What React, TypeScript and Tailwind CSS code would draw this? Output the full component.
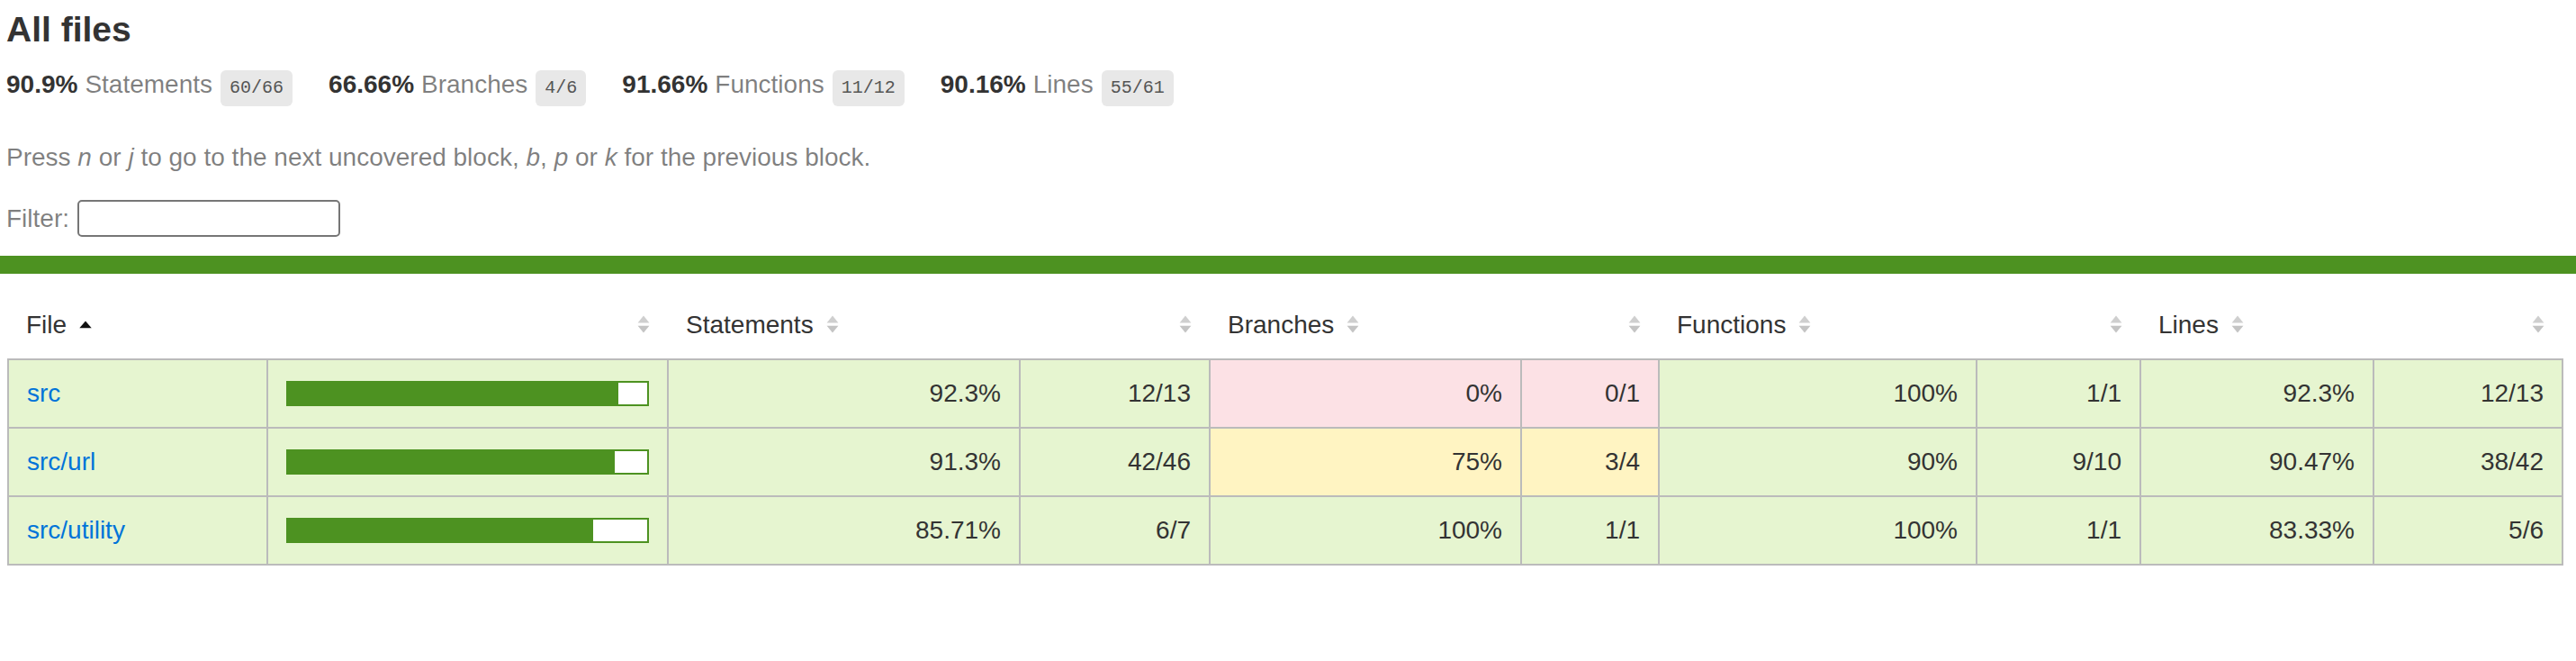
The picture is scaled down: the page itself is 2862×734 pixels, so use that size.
import React from "react";

type Level = "high" | "low" | "medium";

const bg: Record<Level, string> = {
  high: "bg-[rgb(230,245,208)]",
  low: "bg-[#fce1e5]",
  medium: "bg-[#fff4c2]",
};

type Metric = [string, string, Level];

const rows: { file: string; pct: number; s: Metric; b: Metric; f: Metric; l: Metric }[] = [
  { file: "src", pct: 92, s: ["92.3%", "12/13", "high"], b: ["0%", "0/1", "low"], f: ["100%", "1/1", "high"], l: ["92.3%", "12/13", "high"] },
  { file: "src/url", pct: 91, s: ["91.3%", "42/46", "high"], b: ["75%", "3/4", "medium"], f: ["90%", "9/10", "high"], l: ["90.47%", "38/42", "high"] },
  { file: "src/utility", pct: 85, s: ["85.71%", "6/7", "high"], b: ["100%", "1/1", "high"], f: ["100%", "1/1", "high"], l: ["83.33%", "5/6", "high"] },
];

const summary = [
  { pct: "90.9%", label: "Statements", frac: "60/66" },
  { pct: "66.66%", label: "Branches", frac: "4/6" },
  { pct: "91.66%", label: "Functions", frac: "11/12" },
  { pct: "90.16%", label: "Lines", frac: "55/61" },
];

function Sorter({ sorted = false }: { sorted?: boolean }) {
  return (
    <svg width="14" height="20" viewBox="0 0 14 20" className="inline-block align-baseline ml-[14px]">
      {sorted ? (
        <path d="M7 6.4 L13.7 14.3 L0.3 14.3 Z" fill="#111" />
      ) : (
        <>
          <path d="M7 0.6 L13.4 8.4 L0.6 8.4 Z" fill="#cfcfcf" />
          <path d="M0.6 11.8 L13.4 11.8 L7 19.6 Z" fill="#c4c4c4" />
        </>
      )}
    </svg>
  );
}

const cell = "px-[20px] py-[20px] leading-[34px] border-r-2 border-[#bbb] text-right text-[#333]";

export default function App() {
  return (
    <div className="min-h-screen bg-white text-[#333] text-[28px]" style={{ fontFamily: '"Liberation Sans", Arial, Helvetica, sans-serif' }}>
      <div className="pl-[7px] pt-[10px]">
        <h1 className="text-[39px] leading-[46px] font-bold m-0">All files</h1>
        <div className="mt-[18px] flex items-baseline">
          {summary.map((s) => (
            <div key={s.label} className="flex items-baseline mr-[40px] leading-[40px]">
              <span className="font-bold">{s.pct}</span>
              <span className="ml-[8px] text-[rgba(0,0,0,0.5)]">{s.label}</span>
              <span
                className="ml-[9px] px-[10px] py-[8px] leading-[24px] text-[20px] text-[#555] bg-[#e8e8e8] rounded-[6px]"
                style={{ fontFamily: '"Liberation Mono", Consolas, monospace' }}
              >
                {s.frac}
              </span>
            </div>
          ))}
        </div>
        <p className="mt-[41px] leading-[32px] text-[rgba(0,0,0,0.5)]">
          Press <em>n</em> or <em>j</em> to go to the next uncovered block, <em>b</em>, <em>p</em> or <em>k</em> for the
          previous block.
        </p>
        <div className="mt-[31px] flex items-center h-[41px] text-[rgba(0,0,0,0.5)]">
          <span className="leading-[32px]">Filter:</span>
          <input
            type="search"
            className="ml-[9px] w-[292px] h-[41px] border-2 border-[#767676] rounded-[5px] bg-white"
          />
        </div>
      </div>
      <div className="mt-[21px] h-[20px] bg-[rgb(77,146,33)]" />
      <div className="pl-[8px] pr-[14px] pt-[20px]">
        <table className="w-full table-fixed border-collapse">
          <colgroup>
            <col className="w-[288px]" />
            <col className="w-[445px]" />
            <col className="w-[391px]" />
            <col className="w-[211px]" />
            <col className="w-[346px]" />
            <col className="w-[153px]" />
            <col className="w-[353px]" />
            <col className="w-[182px]" />
            <col className="w-[259px]" />
            <col className="w-[210px]" />
          </colgroup>
          <thead>
            <tr className="border-b-2 border-[#bbb]">
              <th className="p-[20px] leading-[34px] font-normal text-left whitespace-nowrap">
                File
                <Sorter sorted />
              </th>
              <th className="p-[20px] leading-[34px] font-normal text-right">
                <Sorter />
              </th>
              <th className="p-[20px] leading-[34px] font-normal text-left whitespace-nowrap">
                Statements
                <Sorter />
              </th>
              <th className="p-[20px] leading-[34px] font-normal text-right">
                <Sorter />
              </th>
              <th className="p-[20px] leading-[34px] font-normal text-left whitespace-nowrap">
                Branches
                <Sorter />
              </th>
              <th className="p-[20px] leading-[34px] font-normal text-right">
                <Sorter />
              </th>
              <th className="p-[20px] leading-[34px] font-normal text-left whitespace-nowrap">
                Functions
                <Sorter />
              </th>
              <th className="p-[20px] leading-[34px] font-normal text-right">
                <Sorter />
              </th>
              <th className="p-[20px] leading-[34px] font-normal text-left whitespace-nowrap">
                Lines
                <Sorter />
              </th>
              <th className="p-[20px] leading-[34px] font-normal text-right">
                <Sorter />
              </th>
            </tr>
          </thead>
          <tbody className="border-2 border-[#bbb]">
            {rows.map((r) => (
              <tr key={r.file} className="border-b-2 border-[#bbb]">
                <td className={`px-[20px] py-[20px] leading-[34px] border-r-2 border-[#bbb] text-left whitespace-nowrap ${bg[r.s[2]]}`}>
                  <a href="#" className="text-[#0074d9] no-underline">
                    {r.file}
                  </a>
                </td>
                <td className={`px-[20px] py-[20px] border-r-2 border-[#bbb] align-middle ${bg[r.s[2]]}`}>
                  <div className="border-2 border-[rgb(77,146,33)] leading-[0] flex">
                    <div className="h-[24px] bg-[rgb(77,146,33)]" style={{ width: `${r.pct}%` }} />
                    <div className="h-[24px] bg-white" style={{ width: `${100 - r.pct}%` }} />
                  </div>
                </td>
                <td className={`${cell} ${bg[r.s[2]]}`}>{r.s[0]}</td>
                <td className={`${cell} ${bg[r.s[2]]}`}>{r.s[1]}</td>
                <td className={`${cell} ${bg[r.b[2]]}`}>{r.b[0]}</td>
                <td className={`${cell} ${bg[r.b[2]]}`}>{r.b[1]}</td>
                <td className={`${cell} ${bg[r.f[2]]}`}>{r.f[0]}</td>
                <td className={`${cell} ${bg[r.f[2]]}`}>{r.f[1]}</td>
                <td className={`${cell} ${bg[r.l[2]]}`}>{r.l[0]}</td>
                <td className={`px-[20px] py-[20px] leading-[34px] text-right text-[#333] ${bg[r.l[2]]}`}>{r.l[1]}</td>
              </tr>
            ))}
          </tbody>
        </table>
      </div>
    </div>
  );
}
